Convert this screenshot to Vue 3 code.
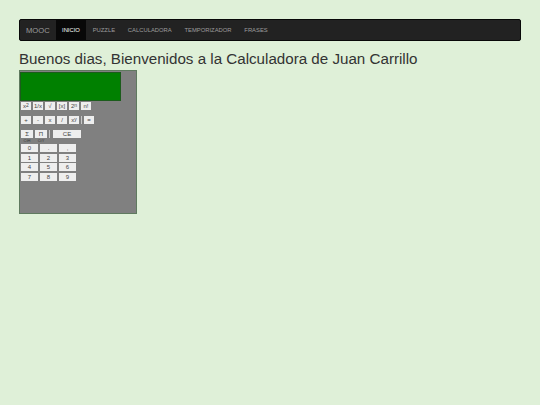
<template>
  <div class="page">
    <nav class="navbar">
      <a class="navbar__brand">MOOC</a>
      <a
        v-for="item in navItems"
        :key="item"
        class="navbar__item"
        :class="{ 'navbar__item--active': item === 'INICIO' }"
      >
        {{ item }}
      </a>
    </nav>

    <h1 class="title">Buenos dias, Bienvenidos a la Calculadora de Juan Carrillo</h1>

    <div class="calc">
      <div class="calc__display"></div>

      <div class="calc__row calc__row--funcs">
        <button v-for="f in funcs" :key="f" class="key key--small" v-html="f"></button>
      </div>

      <div class="calc__row calc__row--ops">
        <button v-for="o in ops" :key="o" class="key key--small" v-html="o"></button>
        <span class="calc__sep"></span>
        <button class="key key--small">=</button>
      </div>

      <div class="calc__row calc__row--mem">
        <div class="calc__stack">
          <button class="key key--mem">Σ</button>
          <span class="calc__hint">CtH</span>
        </div>
        <div class="calc__stack">
          <button class="key key--mem">Π</button>
          <span class="calc__hint">CtY</span>
        </div>
        <span class="calc__sep"></span>
        <button class="key key--ce">CE</button>
      </div>

      <div class="calc__digits">
        <button v-for="d in digits" :key="d" class="key key--digit">{{ d }}</button>
      </div>
    </div>
  </div>
</template>

<script setup>
const navItems = ['INICIO', 'PUZZLE', 'CALCULADORA', 'TEMPORIZADOR', 'FRASES']
const funcs = ['x<sup>2</sup>', '1/x', '√', '[x]', '2<sup>n</sup>', 'n!']
const ops = ['+', '-', 'x', '/', 'x<sup>y</sup>']
const digits = ['0', '.', ',', '1', '2', '3', '4', '5', '6', '7', '8', '9']
</script>

<style>
html,
body {
  margin: 0;
  background: #dff0d8;
}
</style>

<style scoped>
.page {
  box-sizing: border-box;
  width: 540px;
  height: 405px;
  padding: 19px;
  background: #dff0d8;
  font-family: 'Liberation Sans', Arial, sans-serif;
  color: #333333;
}
.navbar {
  display: flex;
  align-items: stretch;
  height: 22px;
  box-sizing: border-box;
  background: #222222;
  border: 1px solid #080808;
  border-radius: 2px;
  color: #9d9d9d;
  opacity: 0.999;
}
.navbar__brand {
  display: flex;
  align-items: center;
  padding: 0 6px;
  font-size: 7.6px;
}
.navbar__item {
  display: flex;
  align-items: center;
  padding: 0 6.4px;
  font-size: 5.85px;
}
.navbar__item--active {
  background: #080808;
  color: #ffffff;
}
.title {
  margin: 8px 0 0;
  font-size: 15.17px;
  line-height: 20px;
  font-weight: 400;
  opacity: 0.999;
}
.calc {
  box-sizing: border-box;
  width: 118px;
  height: 144px;
  margin-top: 1px;
  padding-top: 1px;
  background: #808080;
  border: 1px solid #5f7a5f;
  opacity: 0.999;
}
.calc__display {
  box-sizing: border-box;
  width: 101px;
  height: 29px;
  background: #008000;
  border: 1px solid #1c5c1c;
}
.calc__row {
  display: flex;
  align-items: flex-start;
  gap: 2px;
  padding-left: 1px;
}
.calc__row--funcs {
  margin-top: 1px;
}
.calc__row--ops {
  margin-top: 6px;
}
.calc__row--mem {
  margin-top: 6px;
  height: 14px;
}
.calc__sep {
  width: 1px;
  height: 8px;
  background: #c8c8c8;
}
.calc__stack {
  display: flex;
  flex-direction: column;
  align-items: center;
}
.calc__hint {
  font-size: 4px;
  line-height: 5px;
  color: #3c3c3c;
}
.calc__digits {
  display: grid;
  grid-template-columns: repeat(3, 17px);
  grid-auto-rows: 8px;
  column-gap: 2px;
  row-gap: 1.5px;
  padding-left: 1px;
}
.key {
  box-sizing: border-box;
  padding: 0;
  border: 0;
  background: #eeeeee;
  color: #444444;
  font-family: inherit;
  font-size: 6px;
  line-height: 8px;
  height: 8px;
  text-align: center;
}
.key :deep(sup) {
  font-size: 5px;
  line-height: 0;
  vertical-align: 1.5px;
}
.key--small {
  width: 10px;
}
.key--mem {
  width: 12px;
}
.key--ce {
  width: 28px;
  margin-left: 1px;
}
.key--digit {
  width: 17px;
}
</style>
